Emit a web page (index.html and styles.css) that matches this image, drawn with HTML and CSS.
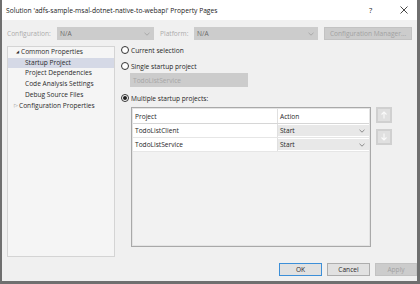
FILE: index.html
```html
<!DOCTYPE html>
<html lang="en">
  <head>
    <meta charset="UTF-8" />
    <title>Property Pages</title>
    <link rel="stylesheet" href="styles.css">
  </head>
  <body>
    <div class="window">
      <!-- title bar -->
      <div class="titlebar">
        <span class="title">Solution 'adfs-sample-msal-dotnet-native-to-webapi' Property Pages</span>
        <span class="help">?</span>
        <span class="close">
          <svg width="8" height="8" viewBox="0 0 8 8"><path d="M0.5 0.5 L7.5 7.5 M7.5 0.5 L0.5 7.5" stroke="#333" stroke-width="0.9" fill="none"/></svg>
        </span>
      </div>

      <!-- configuration row -->
      <div class="config-row">
        <span class="config-label">Configuration:</span>
        <div class="select select-config">
          <span>N/A</span>
          <svg class="chev" width="6" height="4" viewBox="0 0 6 4"><path d="M0.5 0.8 L3 3.2 L5.5 0.8" stroke="#a8a8a8" fill="none"/></svg>
        </div>
        <span class="config-label label-platform">Platform:</span>
        <div class="select select-platform">
          <span>N/A</span>
          <svg class="chev" width="6" height="4" viewBox="0 0 6 4"><path d="M0.5 0.8 L3 3.2 L5.5 0.8" stroke="#a8a8a8" fill="none"/></svg>
        </div>
        <div class="btn-disabled config-manager">Configuration Manager...</div>
      </div>

      <!-- main area -->
      <div class="main">
        <div class="tree">
          <div class="tree-row"><span class="twisty">&#9698;</span>Common Properties</div>
          <div class="tree-row child selected">Startup Project</div>
          <div class="tree-row child">Project Dependencies</div>
          <div class="tree-row child">Code Analysis Settings</div>
          <div class="tree-row child">Debug Source Files</div>
          <div class="tree-row closed"><span class="twisty-closed">&#9655;</span>Configuration Properties</div>
        </div>

        <div class="page">
          <div class="radio-row row-current">
            <span class="radio"></span>Current selection
          </div>
          <div class="radio-row row-single">
            <span class="radio"></span>Single startup project
          </div>
          <div class="select select-single">
            <span>TodoListService</span>
          </div>
          <div class="radio-row row-multi">
            <span class="radio checked"></span>Multiple startup projects:
          </div>

          <div class="grid-wrap">
            <div class="grid">
              <div class="grid-head">
                <div class="cell col-project">Project</div>
                <div class="cell col-action">Action</div>
              </div>
              <div class="grid-row">
                <div class="cell col-project">TodoListClient</div>
                <div class="cell col-action action-select">Start
                  <svg class="chev" width="6" height="4" viewBox="0 0 6 4"><path d="M0.5 0.8 L3 3.2 L5.5 0.8" stroke="#8a8a8a" fill="none"/></svg>
                </div>
              </div>
              <div class="grid-row">
                <div class="cell col-project">TodoListService</div>
                <div class="cell col-action action-select">Start
                  <svg class="chev" width="6" height="4" viewBox="0 0 6 4"><path d="M0.5 0.8 L3 3.2 L5.5 0.8" stroke="#8a8a8a" fill="none"/></svg>
                </div>
              </div>
            </div>
            <div class="move-buttons">
              <div class="move-btn">
                <svg width="8" height="8" viewBox="0 0 8 8"><path d="M4 7.5 L4 1 M1.5 3.5 L4 1 L6.5 3.5" stroke="#fafafa" stroke-width="1.1" fill="none"/></svg>
              </div>
              <div class="move-btn">
                <svg width="8" height="8" viewBox="0 0 8 8"><path d="M4 0.5 L4 7 M1.5 4.5 L4 7 L6.5 4.5" stroke="#fafafa" stroke-width="1.1" fill="none"/></svg>
              </div>
            </div>
          </div>
        </div>
      </div>

      <!-- dialog buttons -->
      <div class="footer">
        <div class="btn btn-default">OK</div>
        <div class="btn">Cancel</div>
        <div class="btn-disabled btn-apply">Apply</div>
      </div>
    </div>
  </body>
</html>
```

FILE: styles.css
```css
/* dialog window */
body {
  margin: 0;
  font-family: "Open Sans", "Noto Sans", sans-serif;
  font-size: 6.6px;
  color: #1e1e1e;
  background: #ffffff;
}

.window {
  width: 420px;
  height: 284px;
  box-sizing: border-box;
  background-color: #f0f0f0;
  border-left: 2px solid #6f6f6f;
  border-right: 3px solid #6f6f6f;
  border-bottom: 3px solid #6f6f6f;
  display: flex;
  flex-direction: column;
}

.titlebar {
  height: 20px;
  background: #ffffff;
  display: flex;
  align-items: center;
  padding-left: 4px;
  font-size: 6.7px;
  color: #1a1a1a;
}

.title {
  flex: 1;
}

.help {
  width: 10px;
  font-size: 7.5px;
  margin-right: 21px;
}

.close {
  width: 8px;
  height: 8px;
  margin-right: 9px;
  display: flex;
}

/* configuration row */
.config-row {
  display: flex;
  align-items: center;
  height: 13px;
  margin-top: 7px;
  padding-left: 5px;
}

.config-label {
  color: #ababab;
  width: 50px;
}

.label-platform {
  width: 34px;
  margin-left: 6px;
}

.select {
  height: 13px;
  background-color: #cccccc;
  display: flex;
  align-items: center;
  justify-content: space-between;
  padding: 0 4px 0 3px;
  box-sizing: border-box;
  color: #6a6a6a;
}

.select-config {
  width: 97px;
}

.select-platform {
  width: 124px;
}

.btn-disabled {
  background-color: #cccccc;
  border: 1px solid #c2c2c2;
  color: #a2a2a2;
  box-sizing: border-box;
  display: flex;
  align-items: center;
  justify-content: center;
}

.config-manager {
  width: 88px;
  height: 13px;
  margin-left: 6px;
}

/* main area */
.main {
  display: flex;
  margin-top: 6px;
  padding-left: 5px;
  height: 211px;
}

.tree {
  width: 108px;
  height: 211px;
  box-sizing: border-box;
  background-color: #f5f5f5;
  border: 1px solid #d4d4d4;
  padding-top: 0;
}

.tree-row {
  height: 10.7px;
  line-height: 10.7px;
  padding-left: 8px;
  white-space: nowrap;
  color: #2a2a2a;
}

.twisty {
  font-size: 4px;
  display: inline-block;
  width: 3px;
  margin-right: 2px;
  vertical-align: 1px;
}

.twisty-closed {
  font-size: 5px;
  display: inline-block;
  width: 4px;
  margin-right: 1px;
  margin-left: -2px;
  color: #888;
  vertical-align: 1px;
}

.tree-row.child {
  padding-left: 17px;
}

.tree-row.selected {
  background-color: #d5d9e6;
}

.page {
  flex: 1;
  padding-left: 6px;
}

.radio-row {
  display: flex;
  align-items: center;
  height: 10px;
  white-space: nowrap;
}

.row-current {
  margin-top: -1px;
}

.row-single {
  margin-top: 6px;
}

.row-multi {
  margin-top: 6px;
}

.radio {
  width: 8px;
  height: 8px;
  box-sizing: border-box;
  border: 1px solid #333333;
  border-radius: 50%;
  background: #ffffff;
  margin-right: 2px;
  display: flex;
  align-items: center;
  justify-content: center;
}

.radio.checked::after {
  content: "";
  width: 4px;
  height: 4px;
  border-radius: 50%;
  background: #1e1e1e;
}

.select-single {
  width: 118px;
  height: 14px;
  margin: 2px 0 0 9px;
  color: #a6a6a6;
}

/* projects grid */
.grid-wrap {
  display: flex;
  margin: 4px 0 0 10px;
}

.grid {
  width: 240px;
  height: 140px;
  box-sizing: border-box;
  border: 1px solid #a9a9a9;
  box-shadow: inset 0 0 0 1px #e4e4e4;
  background-color: #f2f2f2;
  padding: 1px;
}

.grid-head,
.grid-row {
  display: flex;
  height: 14px;
  background: #ffffff;
  border-bottom: 1px solid #e6e6e6;
  box-sizing: border-box;
}

.grid-head {
  height: 15px;
  border-bottom: 1px solid #d6d6d6;
}

.cell {
  display: flex;
  align-items: center;
  padding-left: 2px;
  white-space: nowrap;
}

.col-project {
  width: 142px;
  border-right: 1px solid #e0e0e0;
}

.col-action {
  flex: 1;
}

.action-select {
  background-color: #e8e8e8;
  justify-content: space-between;
  padding-right: 4px;
  margin: 1px 0;
}

.move-buttons {
  display: flex;
  flex-direction: column;
  gap: 6px;
  margin-left: 5px;
}

.move-btn {
  width: 16px;
  height: 16px;
  box-sizing: border-box;
  background-color: #e0e0e0;
  border: 2px solid #d0d0d0;
  display: flex;
  align-items: center;
  justify-content: center;
}

/* dialog buttons */
.footer {
  display: flex;
  justify-content: flex-end;
  gap: 5px;
  margin-top: 6px;
  padding-right: 0;
}

.btn {
  width: 43px;
  height: 13px;
  box-sizing: border-box;
  background-color: #e1e1e1;
  border: 1px solid #adadad;
  display: flex;
  align-items: center;
  justify-content: center;
  color: #2a2a2a;
}

.btn-default {
  border-color: #3c8fd8;
}

.btn-apply {
  width: 42px;
  height: 13px;
}
```
